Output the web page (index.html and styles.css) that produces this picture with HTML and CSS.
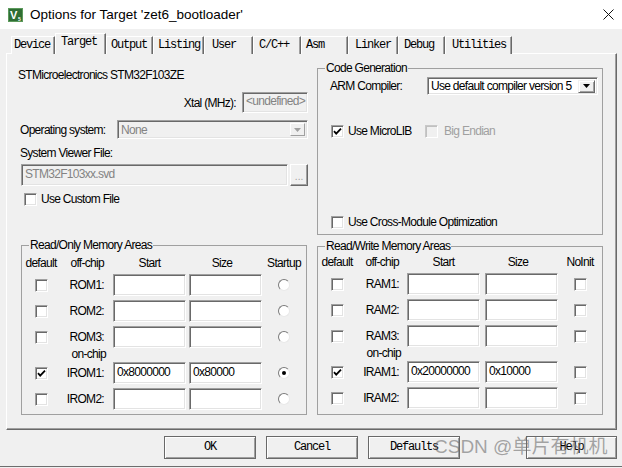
FILE: index.html
```html
<!DOCTYPE html>
<html>
<head>
<meta charset="utf-8">
<link rel="stylesheet" href="styles.css">
</head>
<body>
<div class="window">
  <div class="titlebar">
    <svg class="app-icon" width="15" height="14" viewBox="0 0 15 14">
      <rect x="0" y="0" width="15" height="14" fill="#2f6e33"/>
      <rect x="0.5" y="0.5" width="14" height="13" fill="none" stroke="#5c9a5c"/>
      <text x="2" y="11" font-family="Liberation Sans, sans-serif" font-size="11" font-weight="bold" fill="#fff">V</text>
      <text x="10" y="13" font-family="Liberation Sans, sans-serif" font-size="5" font-weight="bold" fill="#fff">5</text>
    </svg>
    <span class="title">Options for Target 'zet6_bootloader'</span>
    <svg class="close" width="11" height="11" viewBox="0 0 11 11">
      <path d="M0.5 0.5 L10.5 10.5 M10.5 0.5 L0.5 10.5" stroke="#111" stroke-width="1" fill="none"/>
    </svg>
  </div>

  <div class="tabs">
    <div class="tab">Device</div>
    <div class="tab active">Target</div>
    <div class="tab">Output</div>
    <div class="tab">Listing</div>
    <div class="tab">User</div>
    <div class="tab">C/C++</div>
    <div class="tab">Asm</div>
    <div class="tab">Linker</div>
    <div class="tab">Debug</div>
    <div class="tab">Utilities</div>
  </div>

  <div class="panel">
    <div class="col-left">
      <div class="device">STMicroelectronics STM32F103ZE</div>
      <div class="row xtal">
        <span>Xtal (MHz):</span>
        <div class="edit disabled xtal-edit">&lt;undefined&gt;</div>
      </div>
      <div class="row os">
        <span class="os-label">Operating system:</span>
        <div class="combo disabled os-combo">
          <span class="combo-text">None</span>
          <span class="drop drop-disabled">
            <svg width="7" height="4" viewBox="0 0 7 4"><path d="M0 0 H7 L3.5 4 Z" fill="#a0a0a0"/></svg>
          </span>
        </div>
      </div>
      <div class="svf-label">System Viewer File:</div>
      <div class="row svd">
        <div class="edit disabled svd-edit">STM32F103xx.svd</div>
        <div class="dots">...</div>
      </div>
      <div class="check custom">
        <span class="cb"></span><span>Use Custom File</span>
      </div>

      <fieldset class="group mem ro">
        <legend>Read/Only Memory Areas</legend>
        <div class="mem-grid ro-grid">
          <div class="hd c">default</div>
          <div class="hd r">off-chip</div>
          <div class="hd num">Start</div>
          <div class="hd num size">Size</div>
          <div class="hd c">Startup</div>

          <div class="cell c first"><span class="cb"></span></div>
          <div class="lbl">ROM1:</div>
          <div class="edit num"></div>
          <div class="edit num"></div>
          <div class="cell c"><span class="radio"></span></div>

          <div class="cell c first"><span class="cb"></span></div>
          <div class="lbl">ROM2:</div>
          <div class="edit num"></div>
          <div class="edit num"></div>
          <div class="cell c"><span class="radio"></span></div>

          <div class="cell c first"><span class="cb"></span></div>
          <div class="lbl">ROM3:</div>
          <div class="edit num"></div>
          <div class="edit num"></div>
          <div class="cell c"><span class="radio"></span></div>

          <div class="onchip">on-chip</div>

          <div class="cell c first"><span class="cb checked"><svg width="9" height="9" viewBox="0 0 9 9"><path d="M1 4.2 L3.2 6.6 L8 1.6" stroke="#000" stroke-width="1.8" fill="none"/></svg></span></div>
          <div class="lbl">IROM1:</div>
          <div class="edit num">0x8000000</div>
          <div class="edit num">0x80000</div>
          <div class="cell c"><span class="radio on"></span></div>

          <div class="cell c first"><span class="cb"></span></div>
          <div class="lbl">IROM2:</div>
          <div class="edit num"></div>
          <div class="edit num"></div>
          <div class="cell c"><span class="radio"></span></div>
        </div>
      </fieldset>
    </div>

    <div class="col-right">
      <fieldset class="group codegen">
        <legend>Code Generation</legend>
        <div class="row arm">
          <span>ARM Compiler:</span>
          <div class="combo arm-combo">
            <span class="combo-text">Use default compiler version 5</span>
            <span class="drop">
              <svg width="7" height="4" viewBox="0 0 7 4"><path d="M0 0 H7 L3.5 4 Z" fill="#000"/></svg>
            </span>
          </div>
        </div>
        <div class="row libs">
          <div class="check microlib">
            <span class="cb checked"><svg width="9" height="9" viewBox="0 0 9 9"><path d="M1 4.2 L3.2 6.6 L8 1.6" stroke="#000" stroke-width="1.8" fill="none"/></svg></span><span>Use MicroLIB</span>
          </div>
          <div class="check disabled-check">
            <span class="cb cb-disabled"></span><span>Big Endian</span>
          </div>
        </div>
        <div class="check cross">
          <span class="cb"></span><span>Use Cross-Module Optimization</span>
        </div>
      </fieldset>

      <fieldset class="group mem rw">
        <legend>Read/Write Memory Areas</legend>
        <div class="mem-grid rw-grid">
          <div class="hd c">default</div>
          <div class="hd r">off-chip</div>
          <div class="hd num">Start</div>
          <div class="hd num size">Size</div>
          <div class="hd c">NoInit</div>

          <div class="cell c first"><span class="cb"></span></div>
          <div class="lbl">RAM1:</div>
          <div class="edit num"></div>
          <div class="edit num"></div>
          <div class="cell c"><span class="cb"></span></div>

          <div class="cell c first"><span class="cb"></span></div>
          <div class="lbl">RAM2:</div>
          <div class="edit num"></div>
          <div class="edit num"></div>
          <div class="cell c"><span class="cb"></span></div>

          <div class="cell c first"><span class="cb"></span></div>
          <div class="lbl">RAM3:</div>
          <div class="edit num"></div>
          <div class="edit num"></div>
          <div class="cell c"><span class="cb"></span></div>

          <div class="onchip">on-chip</div>

          <div class="cell c first"><span class="cb checked"><svg width="9" height="9" viewBox="0 0 9 9"><path d="M1 4.2 L3.2 6.6 L8 1.6" stroke="#000" stroke-width="1.8" fill="none"/></svg></span></div>
          <div class="lbl">IRAM1:</div>
          <div class="edit num">0x20000000</div>
          <div class="edit num">0x10000</div>
          <div class="cell c"><span class="cb"></span></div>

          <div class="cell c first"><span class="cb"></span></div>
          <div class="lbl">IRAM2:</div>
          <div class="edit num"></div>
          <div class="edit num"></div>
          <div class="cell c"><span class="cb"></span></div>
        </div>
      </fieldset>
    </div>
  </div>

  <div class="buttons">
    <div class="btn">OK</div>
    <div class="btn">Cancel</div>
    <div class="btn">Defaults</div>
    <div class="btn help">Help</div>
  </div>

  <div class="watermark">CSDN @单片有机机</div>
</div>
</body>
</html>
```

FILE: styles.css
```css
* {
  box-sizing: border-box;
}

html, body {
  margin: 0;
  padding: 0;
}

body {
  width: 622px;
  height: 468px;
  overflow: hidden;
  background: #f0f0f0;
  font-family: "Liberation Sans", Arial, sans-serif;
  font-size: 12px;
  letter-spacing: -0.7px;
  color: #000;
}

.window {
  position: relative;
  width: 622px;
  height: 467px;
  border-bottom: 1px solid #6d6d6d;
}

/* title bar */
.titlebar {
  height: 29px;
  background: #fff;
  display: flex;
  align-items: center;
}

.app-icon {
  margin-left: 8px;
  flex: none;
}

.title {
  margin-left: 7px;
  font-family: "Liberation Sans", Arial, sans-serif;
  font-size: 13.5px;
  letter-spacing: 0;
  color: #000;
}

.close {
  margin-left: auto;
  margin-right: 8px;
  flex: none;
}

/* tabs */
.tabs {
  display: flex;
  align-items: flex-end;
  height: 21px;
  margin-top: 4px;
  padding-left: 11px;
  font-family: "Liberation Mono", "Courier New", monospace;
  font-size: 12px;
  letter-spacing: -1.2px;
}

.tab {
  height: 18px;
  background: #f0f0f0;
  border-top: 1px solid #fff;
  border-left: 1px solid #fff;
  border-right: 1px solid #696969;
  box-shadow: inset -1px 0 #a0a0a0;
  padding-left: 4px;
  line-height: 17px;
  white-space: nowrap;
}

.tab:nth-child(1) { width: 44px; padding-left: 2px; }
.tab:nth-child(2) { width: 51px; }
.tab:nth-child(3) { width: 47px; }
.tab:nth-child(4) { width: 51px; }
.tab:nth-child(5) { width: 49px; padding-left: 7px; }
.tab:nth-child(6) { width: 48px; padding-left: 5px; }
.tab:nth-child(7) { width: 47px; }
.tab:nth-child(8) { width: 50px; padding-left: 6px; }
.tab:nth-child(9) { width: 47px; padding-left: 5px; }
.tab:nth-child(10) { width: 67px; padding-left: 6px; }

.tab.active {
  position: relative;
  z-index: 1;
  height: 21px;
  line-height: 17px;
  padding-left: 5px;
}

/* panel */
.panel {
  margin-top: -1px;
  margin-left: 6px;
  width: 611px;
  height: 377px;
  border-top: 1px solid #fff;
  border-left: 1px solid #fff;
  border-right: 1px solid #696969;
  border-bottom: 1px solid #696969;
  box-shadow: inset -1px -1px #a0a0a0;
  display: grid;
  grid-template-columns: 290px 286px;
  column-gap: 9px;
  align-items: start;
  padding: 7px 0 0 11px;
}

.col-left, .col-right {
  display: flex;
  flex-direction: column;
}

.row {
  display: flex;
  align-items: center;
  white-space: nowrap;
}

.device {
  margin-top: 7px;
  line-height: 14px;
  white-space: nowrap;
}

.xtal {
  margin-top: 10px;
  height: 21px;
  justify-content: flex-end;
}

.xtal-edit {
  margin-left: 6px;
  width: 66px;
  height: 21px;
  line-height: 17px;
}

.os {
  margin-top: 7px;
  height: 19px;
}

.os-label {
  padding-left: 2px;
}

.os-combo {
  margin-left: auto;
  width: 191px;
  height: 19px;
}

.svf-label {
  margin-top: 7px;
  line-height: 14px;
  padding-left: 2px;
}

.svd {
  margin-top: 4px;
  height: 22px;
}

.svd-edit {
  margin-left: 3px;
  width: 268px;
  height: 22px;
  line-height: 18px;
}

.dots {
  margin-left: 2px;
  width: 18px;
  height: 22px;
  border: 1px solid;
  border-color: #fff #696969 #696969 #fff;
  box-shadow: inset -1px -1px #a0a0a0;
  color: #a0a0a0;
  font-size: 10px;
  text-align: center;
  line-height: 24px;
  letter-spacing: 0;
}

/* generic controls */
.edit {
  background: #fff;
  border: 1px solid;
  border-color: #a0a0a0 #fff #fff #a0a0a0;
  box-shadow: inset 1px 1px #696969, inset -1px -1px #e3e3e3;
  padding-left: 3px;
  white-space: nowrap;
  overflow: hidden;
}

.edit.disabled {
  background: #f0f0f0;
  color: #838383;
}

.combo {
  display: flex;
  align-items: center;
  background: #fff;
  border: 1px solid;
  border-color: #a0a0a0 #fff #fff #a0a0a0;
  box-shadow: inset 1px 1px #696969, inset -1px -1px #e3e3e3;
  padding: 2px;
}

.combo.disabled {
  background: #f0f0f0;
  color: #838383;
}

.combo-text {
  flex: 1;
  padding-left: 1px;
  white-space: nowrap;
  overflow: hidden;
}

.drop {
  flex: none;
  width: 17px;
  height: 100%;
  display: flex;
  align-items: center;
  justify-content: center;
  background: #f0f0f0;
  border: 1px solid;
  border-color: #f0f0f0 #696969 #696969 #f0f0f0;
  box-shadow: inset 1px 1px #fff, inset -1px -1px #a0a0a0;
}

.drop.drop-disabled {
  width: 15px;
  border-color: #fff #a0a0a0 #a0a0a0 #fff;
  box-shadow: none;
}

.check {
  display: flex;
  align-items: center;
  height: 14px;
  gap: 4px;
  white-space: nowrap;
}

.custom {
  margin-top: 6px;
  margin-left: 6px;
}

.cb {
  flex: none;
  position: relative;
  display: inline-flex;
  align-items: center;
  justify-content: center;
  width: 13px;
  height: 13px;
  background: #fff;
  border: 1px solid;
  border-color: #a0a0a0 #fff #fff #a0a0a0;
  box-shadow: inset 1px 1px #696969, inset -1px -1px #e3e3e3;
}

.cb svg {
  display: block;
}

.cb.cb-disabled {
  background: #f0f0f0;
  border-color: #c8c8c8 #fff #fff #c8c8c8;
  box-shadow: inset 1px 1px #c0c0c0;
}

.radio {
  position: relative;
  display: inline-block;
  width: 12px;
  height: 12px;
  border-radius: 50%;
  background: #fff;
  border: 1px solid;
  border-color: #7a7a7a #e8e8e8 #e8e8e8 #7a7a7a;
}

.radio.on::after {
  content: "";
  position: absolute;
  left: 3px;
  top: 3px;
  width: 4px;
  height: 4px;
  border-radius: 50%;
  background: #000;
}

/* group boxes */
.group {
  margin: 0;
  padding: 0;
  border: 1px solid #a0a0a0;
  min-width: 0;
}

.group legend {
  margin-left: 7px;
  padding: 0 1px;
  line-height: 14px;
  font-size: 12px;
}

.codegen {
  height: 174px;
  padding: 2px 4px 0 0;
}

.arm {
  height: 18px;
  margin-left: 12px;
}

.arm-combo {
  margin-left: auto;
  width: 171px;
  height: 18px;
  padding: 2px;
}

.arm-combo .drop {
  height: 13px;
}

.libs {
  margin-top: 29px;
  margin-left: 13px;
}

.microlib {
  width: 94px;
}

.disabled-check {
  color: #a0a0a0;
  gap: 6px;
}

.cross {
  margin-top: 77px;
  margin-left: 13px;
}

.mem.ro {
  margin-top: 32px;
  margin-left: 3px;
  width: 286px;
  padding: 4px 0 4px 0;
}

.mem.rw {
  margin-top: 4px;
  width: 286px;
  padding: 2px 0 5px 0;
}

.mem-grid {
  display: grid;
  grid-template-rows: 18px 26px 26px 21px 15px 26px 22px;
  align-items: start;
}

.ro-grid {
  grid-template-columns: 38px 46px 80px 76px 44px;
}

.rw-grid {
  grid-template-columns: 38px 45px 79px 78px 44px;
}

.hd {
  line-height: 14px;
  white-space: nowrap;
}

.hd.c {
  text-align: center;
}

.hd.r {
  text-align: right;
  padding-right: 2px;
}

.hd.num {
  justify-self: end;
  width: 73px;
  text-align: center;
}

.hd.num.size {
  padding-right: 7px;
}

.cell {
  height: 22px;
  display: flex;
  align-items: center;
}

.cell.c {
  justify-content: center;
}

.cell.first {
  grid-column: 1;
}

.lbl {
  height: 22px;
  line-height: 22px;
  text-align: right;
  padding-right: 2px;
  white-space: nowrap;
}

.edit.num {
  justify-self: end;
  width: 73px;
  height: 22px;
  line-height: 14px;
  padding-top: 2px;
}

.onchip {
  grid-column: 2;
  line-height: 15px;
  text-align: right;
  white-space: nowrap;
}

/* bottom buttons */
.buttons {
  display: flex;
  margin-top: 6px;
  padding-left: 164px;
  gap: 10px;
}

.btn {
  width: 92px;
  height: 23px;
  border: 1px solid #696969;
  box-shadow: inset 1px 1px #fff, inset -1px -1px #a0a0a0;
  background: #f0f0f0;
  font-family: "Liberation Mono", "Courier New", monospace;
  font-size: 12px;
  letter-spacing: -1.2px;
  text-align: center;
  line-height: 21px;
}

.btn.help {
  margin-left: 56px;
  width: 91px;
}

.watermark {
  position: absolute;
  left: 434px;
  top: 435px;
  font-family: "Liberation Sans", "Noto Sans CJK SC", sans-serif;
  font-size: 19px;
  letter-spacing: 0;
  line-height: 24px;
  color: rgba(110, 110, 110, 0.6);
  white-space: nowrap;
}
```
